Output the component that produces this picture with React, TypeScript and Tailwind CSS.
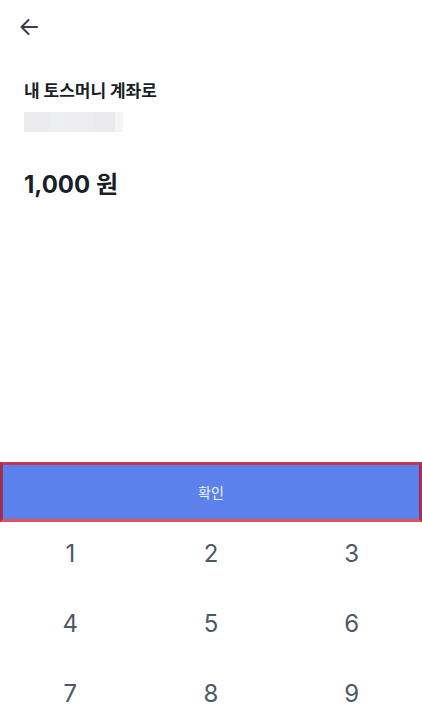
import React from "react";

export default function App() {
  const keys = ["1", "2", "3", "4", "5", "6", "7", "8", "9"];
  return (
    <div
      className="w-[422px] h-[718px] bg-white flex flex-col overflow-hidden"
      style={{ fontFamily: "Inter, 'Noto Sans CJK KR', sans-serif" }}
    >
      <div className="h-[52px] flex items-center pl-[20px] pt-[2px]">
        <svg width="18" height="16" viewBox="0 0 18 16" fill="none">
          <path d="M1.5 8H17M8.5 1L1.5 8L8.5 15" stroke="#333d4b" strokeWidth="2" strokeLinecap="round" strokeLinejoin="round" />
        </svg>
      </div>
      <div className="px-[24px] mt-[26px]">
        <div className="text-[17px] leading-[24px] font-bold text-[#191f28]" style={{ fontFamily: "'Noto Sans CJK KR', sans-serif" }}>
          내 토스머니 계좌로
        </div>
        <div className="mt-[10px] flex h-[20px] w-[99px]">
          <div className="w-[25px] bg-[#ececee]" />
          <div className="w-[22px] bg-[#eeeff1]" />
          <div className="w-[23px] bg-[#ededef]" />
          <div className="w-[21px] bg-[#ebebed]" />
          <div className="w-[8px] bg-[#f4f4f6]" />
        </div>
        <div className="mt-[36px] text-[24px] leading-[30px] font-bold text-[#191f28]">
          1,000 <span style={{ fontFamily: "'Noto Sans CJK KR', sans-serif" }}>원</span>
        </div>
      </div>
      <div className="flex-1" />
      <div className="h-[60px] shrink-0 bg-[#5b82ec] border-[3px] border-t-[#bf3a4b] border-l-[#a02f50] border-r-[#a02f50] border-b-[#df5558] flex items-center justify-center">
        <span className="text-[14px] text-[#eef2fd]" style={{ fontFamily: "'Noto Sans CJK KR', sans-serif" }}>확인</span>
      </div>
      <div className="h-[196px] shrink-0 overflow-hidden">
        <div className="grid grid-cols-3">
          {keys.map((k) => (
            <div key={k} className="h-[70px] flex items-center justify-center pb-[6px] text-[24px] text-[#4e5968]">
              {k}
            </div>
          ))}
        </div>
      </div>
    </div>
  );
}
